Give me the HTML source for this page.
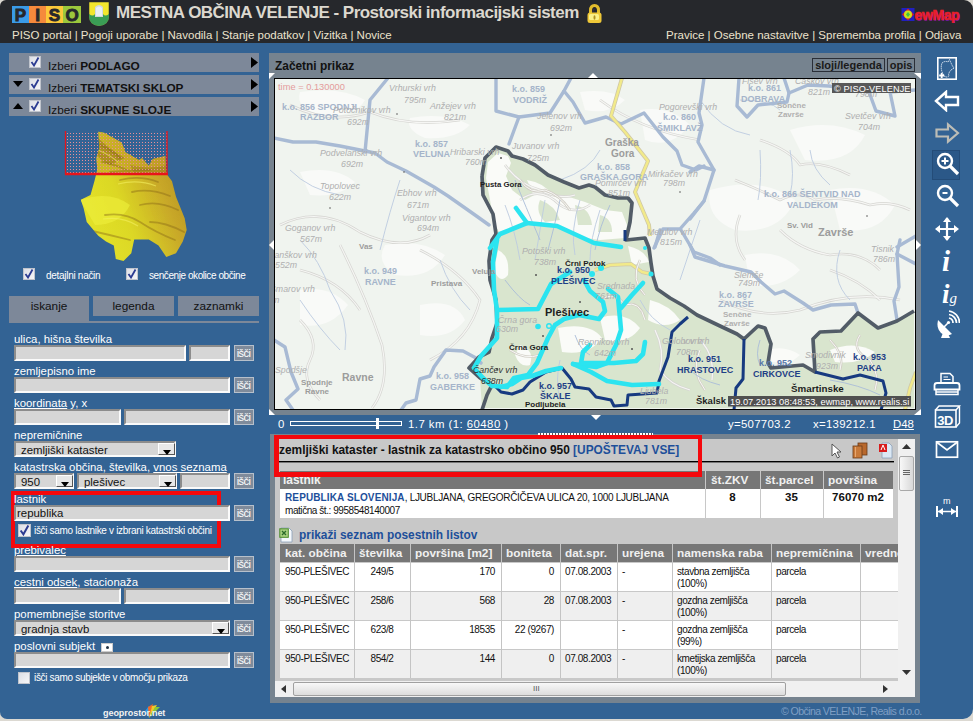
<!DOCTYPE html>
<html><head><meta charset="utf-8">
<style>
*{box-sizing:border-box}
html,body{margin:0;padding:0;width:973px;height:721px;overflow:hidden;background:#dcd9d2;font-family:"Liberation Sans",sans-serif}
.a{position:absolute}
#hdr{left:0;top:0;width:973px;height:43px;background:#26282c;border-radius:6px 9px 0 0}
#body{left:0;top:43px;width:973px;height:676px;background:#336394;border-radius:0 0 10px 7px}
.nav{color:#ece3cc;font-size:11.5px;white-space:nowrap}
.bar{left:9px;width:250px;height:19px;background:#7d8899}
.bar .t{left:39px;top:6px;font-size:11.8px;color:#111;white-space:nowrap}
.cb{width:12px;height:12px;background:linear-gradient(135deg,#dcdfe6,#f6f6f8);border:1px solid #c0c4cc}
.cb svg{position:absolute;left:0;top:0}
.lbl{color:#fff;font-size:11.4px;white-space:nowrap}
.inp{height:16px;background:#d6d6d6;border-top:2px solid #8c8c8c;border-left:2px solid #8c8c8c;border-bottom:2px solid #fafafa;border-right:2px solid #fafafa}
.btn{width:20px;height:16px;background:#7f8b9b;border:1px solid #b7c0cb;color:#fff;font-size:11px;line-height:14px;text-align:center;letter-spacing:-0.6px;text-indent:-1px}
.sel{height:16px;background:#d6d6d6;border-top:2px solid #8c8c8c;border-left:2px solid #8c8c8c;border-bottom:2px solid #fafafa;border-right:2px solid #fafafa;font-size:11.4px;color:#111;padding-left:5px;line-height:14px;white-space:nowrap}
.dd{width:17px;height:12px;background:#e8e8e8;border:1px solid #555;border-top-color:#fff;border-left-color:#fff}
.tab{height:20px;top:296px;background:#7d8899;color:#111;font-size:11.8px;text-align:center;line-height:20px}
.th{font-size:11.8px;font-weight:bold;color:#f0f0f0;background:#777;white-space:nowrap}
.td{font-size:10px;letter-spacing:-0.4px;color:#111;white-space:nowrap}
.tbi{color:#fff}
</style></head><body>
<div id="hdr" class="a"></div>
<div id="body" class="a"></div>

<!-- HEADER -->
<div class="a" style="left:12px;top:6px;width:17px;height:17px;background:#3a9be8"></div>
<div class="a" style="left:29px;top:6px;width:17px;height:17px;background:#f58a3c"></div>
<div class="a" style="left:46px;top:6px;width:17px;height:17px;background:#fcc93a"></div>
<div class="a" style="left:63px;top:6px;width:18px;height:17px;background:#9bc83c"></div>
<svg class="a" style="left:12px;top:6px" width="69" height="17" viewBox="0 0 69 17"><g font-family="Liberation Sans" font-weight="bold" font-size="17" fill="#26282c" stroke="#26282c" stroke-width="0.9" text-anchor="middle"><text x="8.5" y="14.8">P</text><text x="25.5" y="14.8">I</text><text x="42.5" y="14.8">S</text><text x="60" y="14.8">O</text></g></svg>
<svg class="a" style="left:88px;top:1px" width="22" height="26" viewBox="0 0 22 26">
<path d="M1 1 H21 V15 Q21 24 11 25 Q1 24 1 15 Z" fill="#f2e62e" stroke="#26282c" stroke-width="0.5"/>
<path d="M1 13 Q5 16 7 13 L15 13 Q17 16 21 13 V15 Q21 24 11 25 Q1 24 1 15 Z" fill="#3a9d55"/>
<path d="M7 16 V6 Q11 2 15 6 V16 Z" fill="#d0d8e0"/>
<path d="M8 15 V7 Q11 4 14 7 V15Z" fill="#e8eef4"/>
</svg>
<div class="a" style="left:116px;top:3px;font:bold 17px 'Liberation Sans';letter-spacing:-0.53px;color:#dcd8cf;white-space:nowrap">MESTNA OBČINA VELENJE - Prostorski informacijski sistem</div>
<svg class="a" style="left:586px;top:4px" width="17" height="20" viewBox="0 0 17 20">
<path d="M4.5 10 V6.5 Q4.5 1.5 8.5 1.5 Q12.5 1.5 12.5 6.5 V10" fill="none" stroke="#e2bc2c" stroke-width="3"/>
<path d="M6.8 8 Q7 5 8.8 5" fill="none" stroke="#3a3040" stroke-width="1.2"/>
<rect x="1.5" y="8.5" width="14" height="10.5" rx="2.5" fill="#eec838"/>
<rect x="3" y="10" width="10" height="6" rx="1.5" fill="#faf088"/>
<ellipse cx="8.5" cy="13.5" rx="1" ry="2.2" fill="#b09020"/>
</svg>
<div class="a nav" style="left:12px;top:29px">PISO portal | Pogoji uporabe | Navodila | Stanje podatkov | Vizitka | Novice</div>
<div class="a nav" style="left:666px;top:29px">Pravice | Osebne nastavitve | Sprememba profila | Odjava</div>
<svg class="a" style="left:901px;top:7px" width="62" height="16" viewBox="0 0 62 16">
<rect x="0.5" y="1" width="13" height="13" fill="#2020c0"/>
<path d="M7 1.5 L13 7.5 L7 13.5 L1 7.5Z" fill="#e02020"/>
<circle cx="7" cy="7.5" r="4" fill="#c8e020"/>
<path d="M5 7.5 L7 5 L9 7.5 L7 10Z" fill="#40c040"/>
<text x="14.5" y="13.5" font-family="Liberation Sans" font-weight="bold" font-size="14" fill="#5a1a9a" letter-spacing="-0.4">ewMap</text><text x="13.5" y="12.5" font-family="Liberation Sans" font-weight="bold" font-size="14" fill="#e8202a" stroke="#e8202a" stroke-width="0.6" letter-spacing="-0.4">ewMap</text>
</svg>
<!-- LEFT PANEL -->
<div class="a bar" style="top:53px"><div class="a cb" style="left:20px;top:3px"><svg width="10" height="10" viewBox="0 0 10 10"><path d="M1.5 5 L4 8.5 L8.5 0.5" fill="none" stroke="#2c3c92" stroke-width="1.8"/></svg></div><div class="a t">Izberi <b>PODLAGO</b></div><svg class="a" style="left:242px;top:4px" width="7" height="11"><path d="M0 0 L7 5.5 L0 11Z" fill="#000"/></svg></div>
<div class="a bar" style="top:75px"><svg class="a" style="left:4px;top:6px" width="10" height="7"><path d="M0 0 H10 L5 6Z" fill="#000"/></svg><div class="a cb" style="left:20px;top:3px"><svg width="10" height="10" viewBox="0 0 10 10"><path d="M1.5 5 L4 8.5 L8.5 0.5" fill="none" stroke="#2c3c92" stroke-width="1.8"/></svg></div><div class="a t">Izberi <b>TEMATSKI SKLOP</b></div><svg class="a" style="left:242px;top:4px" width="7" height="11"><path d="M0 0 L7 5.5 L0 11Z" fill="#000"/></svg></div>
<div class="a bar" style="top:97px"><svg class="a" style="left:4px;top:6px" width="10" height="7"><path d="M0 6 H10 L5 0Z" fill="#000"/></svg><div class="a cb" style="left:20px;top:3px"><svg width="10" height="10" viewBox="0 0 10 10"><path d="M1.5 5 L4 8.5 L8.5 0.5" fill="none" stroke="#2c3c92" stroke-width="1.8"/></svg></div><div class="a t">Izberi <b>SKUPNE SLOJE</b></div><svg class="a" style="left:242px;top:4px" width="7" height="11"><path d="M0 0 L7 5.5 L0 11Z" fill="#000"/></svg></div>

<!-- overview terrain -->
<svg class="a" style="left:60px;top:125px" width="135" height="140" viewBox="60 125 135 140">
<defs>
<linearGradient id="tg" x1="0" y1="0.6" x2="1" y2="0.2">
<stop offset="0" stop-color="#e6e62a"/><stop offset="0.4" stop-color="#dcd826"/><stop offset="0.7" stop-color="#c8a828"/><stop offset="1" stop-color="#b08a22"/></linearGradient>
<pattern id="dots" width="3" height="3" patternUnits="userSpaceOnUse"><rect x="1" y="1" width="1" height="1" fill="#e89098"/></pattern>
<clipPath id="tc"><path d="M98.3 131.8 L104.1 132.8 L121.6 142.5 L125.5 152.2 L139 160 L142 158 L148.8 165.8 L152.7 159 L165.3 156 L166.3 173.5 L172 181.3 L176 196.8 L184.7 218.2 L186.7 229.9 L182.8 241.5 L176 253.2 L166.3 257 L158.5 245.4 L148.8 239.6 L134.2 239.6 L131.3 253.2 L123.5 261 L115.8 259 L113.8 245.4 L106 241.5 L98.3 235.7 L86.7 222 L83.7 208.5 L80.8 199.8 L90.5 194.9 L94.4 181.3 L97.3 169.7 L96.4 158 L99.3 148.3Z"/></clipPath>
</defs>
<g clip-path="url(#tc)">
<rect x="60" y="125" width="135" height="140" fill="url(#tg)"/>
<path d="M80 200 Q110 190 130 205 Q120 225 95 225Z" fill="#ecec3a" opacity="0.7"/>
<rect x="90" y="125" width="80" height="50" fill="#c09a28" opacity="0.55"/>
<path d="M95 135 Q110 150 125 158 L110 165 Q98 160 95 150Z" fill="#8a6818" opacity="0.45"/>
<path d="M130 165 Q150 170 168 165 L168 175 L135 175Z" fill="#8a6818" opacity="0.35"/>
<g fill="none" stroke="#8a6a18" stroke-width="1.8" opacity="0.45" stroke-linecap="round">
<path d="M120 180 Q140 175 158 182"/>
<path d="M132 192 Q150 188 170 196"/>
<path d="M140 205 Q158 200 178 210"/>
<path d="M150 222 Q165 222 184 232"/>
<path d="M105 215 Q125 212 140 222 Q155 232 175 240"/>
<path d="M88 230 Q110 235 130 240"/>
<path d="M100 145 Q112 150 120 158"/>
<path d="M102 162 Q118 165 130 172"/>
<path d="M110 172 Q135 170 150 170"/>

</g>
<g fill="none" stroke="#f4f060" stroke-width="1.2" opacity="0.6">
<path d="M118 184 Q138 179 156 186"/>
<path d="M103 219 Q123 216 138 226"/>
<path d="M98 150 Q110 155 118 162"/>
</g>
</g>
<rect x="65" y="131.5" width="102.5" height="43" fill="url(#dots)"/>
<path d="M65.5 131 V174 H167 V131" fill="none" stroke="#e8141a" stroke-width="1.3"/>
<path d="M65 174 H168" stroke="#e8141a" stroke-width="2.5"/>
</svg>
<div class="a cb" style="left:23px;top:268px"><svg width="10" height="10" viewBox="0 0 10 10"><path d="M1.5 5 L4 8.5 L8.5 0.5" fill="none" stroke="#2c3c92" stroke-width="1.8"/></svg></div>
<div class="a" style="left:46px;top:270px;font-size:10px;letter-spacing:-0.29px;color:#fff;white-space:nowrap">detajlni način</div>
<div class="a cb" style="left:126px;top:268px"><svg width="10" height="10" viewBox="0 0 10 10"><path d="M1.5 5 L4 8.5 L8.5 0.5" fill="none" stroke="#2c3c92" stroke-width="1.8"/></svg></div>
<div class="a" style="left:149px;top:270px;font-size:10px;letter-spacing:-0.43px;color:#fff;white-space:nowrap">senčenje okolice občine</div>

<!-- tabs -->
<div class="a tab" style="left:9px;width:80px;height:27px">iskanje</div>
<div class="a tab" style="left:93px;width:81px">legenda</div>
<div class="a tab" style="left:178px;width:81px">zaznamki</div>
<div class="a" style="left:89px;top:321px;width:170px;height:2px;background:#7d8899"></div>

<!-- form -->
<div class="a lbl" style="left:14px;top:333px">ulica, hišna številka</div>
<div class="a inp" style="left:14px;top:345px;width:172px"></div>
<div class="a inp" style="left:189px;top:345px;width:41px"></div>
<div class="a btn" style="left:234px;top:345px">išči</div>

<div class="a lbl" style="left:14px;top:365px">zemljepisno ime</div>
<div class="a inp" style="left:14px;top:377px;width:216px"></div>
<div class="a btn" style="left:234px;top:377px">išči</div>

<div class="a lbl" style="left:14px;top:397px"><u>koordinata</u> y, x</div>
<div class="a inp" style="left:14px;top:409px;width:107px"></div>
<div class="a inp" style="left:124px;top:409px;width:106px"></div>
<div class="a btn" style="left:234px;top:409px">išči</div>

<div class="a lbl" style="left:14px;top:429px">nepremičnine</div>
<div class="a sel" style="left:14px;top:441px;width:162px">zemljiški kataster<div class="a dd" style="left:142px;top:0px"><svg class="a" style="left:4px;top:6px" width="8" height="5"><path d="M0 0H8L4 5Z" fill="#000"/></svg></div></div>

<div class="a lbl" style="left:14px;top:461px">katastrska občina, številka, <u>vnos seznama</u></div>
<div class="a sel" style="left:14px;top:473px;width:60px">950<div class="a dd" style="left:40px;top:0px"><svg class="a" style="left:4px;top:6px" width="8" height="5"><path d="M0 0H8L4 5Z" fill="#000"/></svg></div></div>
<div class="a sel" style="left:77px;top:473px;width:100px">plešivec<div class="a dd" style="left:80px;top:0px"><svg class="a" style="left:4px;top:6px" width="8" height="5"><path d="M0 0H8L4 5Z" fill="#000"/></svg></div></div>
<div class="a inp" style="left:180px;top:473px;width:50px"></div>
<div class="a btn" style="left:234px;top:473px">išči</div>

<div class="a" style="left:11px;top:491px;width:210px;height:57px;border:4px solid #f4080c"></div>
<div class="a lbl" style="left:14px;top:493px">lastnik</div>
<div class="a inp" style="left:14px;top:505px;width:216px;font-size:11.4px;color:#111;padding-left:1px;line-height:13px">republika</div>
<div class="a btn" style="left:234px;top:505px">išči</div>
<div class="a cb" style="left:18px;top:524px;width:13px;height:13px"><svg width="11" height="11" viewBox="0 0 10 10"><path d="M1.5 5 L4 8.5 L8.5 0.5" fill="none" stroke="#2c3c92" stroke-width="1.8"/></svg></div>
<div class="a" style="left:34px;top:525px;font-size:10px;letter-spacing:-0.32px;color:#fff;white-space:nowrap">išči samo lastnike v izbrani katastrski občini</div>

<div class="a lbl" style="left:14px;top:544px"><u>prebivalec</u></div>
<div class="a inp" style="left:14px;top:556px;width:216px"></div>
<div class="a btn" style="left:234px;top:556px">išči</div>

<div class="a lbl" style="left:14px;top:576px"><u>cestni odsek</u>, stacionaža</div>
<div class="a inp" style="left:14px;top:588px;width:107px"></div>
<div class="a inp" style="left:124px;top:588px;width:106px"></div>
<div class="a btn" style="left:234px;top:588px">išči</div>

<div class="a lbl" style="left:14px;top:608px">pomembnejše storitve</div>
<div class="a sel" style="left:14px;top:620px;width:216px">gradnja stavb<div class="a dd" style="left:196px;top:0px"><svg class="a" style="left:4px;top:6px" width="8" height="5"><path d="M0 0H8L4 5Z" fill="#000"/></svg></div></div>
<div class="a btn" style="left:234px;top:620px">išči</div>

<div class="a lbl" style="left:14px;top:640px">poslovni subjekt</div>
<div class="a" style="left:101px;top:643px;width:12px;height:9px;background:#fff;border:1px solid #ccc"><div class="a" style="left:4px;top:2px;width:3px;height:3px;background:#234;border-radius:2px"></div></div>
<div class="a inp" style="left:14px;top:652px;width:216px"></div>
<div class="a btn" style="left:234px;top:652px">išči</div>
<div class="a cb" style="left:18px;top:672px;width:12px;height:12px"></div>
<div class="a" style="left:34px;top:672px;font-size:10px;letter-spacing:-0.32px;color:#fff;white-space:nowrap">išči samo subjekte v območju prikaza</div>

<svg class="a" style="left:143px;top:703px" width="19" height="16" viewBox="0 0 19 16">
<path d="M6 15 L2 8 L6 3Z" fill="#2a9ae8"/>
<path d="M6 15 L5 4 L10 1Z" fill="#f06a28"/>
<path d="M6 15 L9 3 L14 2Z" fill="#f4c828"/>
<path d="M6 15 L12 4 L17 4 L11 10Z" fill="#8ac838"/>
</svg>
<div class="a" style="left:103px;top:708px;font:bold 9px 'Liberation Sans';color:#f2f2f2;letter-spacing:-0.05px">geoprostor.net</div>
<!-- MAP PANEL -->
<div class="a" style="left:269px;top:53px;width:652px;height:362px;background:#76838f"></div>
<div class="a" style="left:275px;top:59px;font:bold 11.9px 'Liberation Sans';color:#111;white-space:nowrap">Začetni prikaz</div>
<div class="a" style="left:812px;top:58px;width:73px;height:14px;border:1px solid #2a2f38;font:bold 11px/12px 'Liberation Sans';color:#1a1a1a;text-align:center">sloji/legenda</div>
<div class="a" style="left:887px;top:58px;width:28px;height:14px;border:1px solid #2a2f38;font:bold 11px/12px 'Liberation Sans';color:#1a1a1a;text-align:center">opis</div>
<div class="a" style="left:274px;top:78px;width:642px;height:332px;border:1px solid #000;background:#f3f5f1;overflow:hidden" id="map">
<svg width="640" height="330" viewBox="275 79 640 330" style="position:absolute;left:0;top:0">
<rect x="275" y="79" width="640" height="330" fill="#f0f4ef"/>
<!-- subtle white patches -->
<g fill="#f9faf8">
<path d="M300 92 Q340 86 365 100 Q355 118 320 116 Q295 108 300 92Z"/>
<path d="M410 118 Q445 112 470 125 Q455 140 425 138 Q405 130 410 118Z"/>
<path d="M300 172 Q335 165 355 182 Q340 198 310 195Z"/>
<path d="M385 245 Q420 238 445 255 Q430 280 395 275 Q375 262 385 245Z"/>
<path d="M300 290 Q330 285 348 305 Q330 330 300 325Z"/>
<path d="M420 305 Q455 298 465 320 Q450 340 420 335Z"/>
<path d="M710 190 Q760 175 795 200 Q780 235 735 230 Q705 218 710 190Z"/>
<path d="M790 130 Q830 118 865 135 Q850 165 805 160Z"/>
<path d="M830 190 Q870 182 895 205 Q880 235 840 230Z"/>
<path d="M640 110 Q670 105 690 125 Q670 150 645 140Z"/>
<path d="M745 255 Q780 248 800 270 Q780 290 750 285Z"/>
<path d="M580 92 Q610 88 625 100 Q610 115 585 110Z"/>
</g>
<!-- green fills -->
<g fill="#d9e5ce">
<path d="M482 176 L485 158 L496 147 L508 151 L512 156 L523 159 L535 165 L548 175 L564 182 L579 188 L589 185 L595 187 L605 195 L618 198 L628 198 L632 203 L630 222 L626 240 L645 238 L649 248 L651 263 L653 276 L657 289 L670 298 L684 306 L697 315 L720 326 L737 334 L744 339 L745 408 L482 408 L480 378 L469 368 L479 357 L489 352 L492 338 L497 323 L496 300 L490 280 L489 261 L492 240 L496 234 L493 214 L483 195Z"/>
<path d="M744 339 L758 326 L765 328 L771 344 L768 363 L771 368 L803 365 L815 372 L813 339 L820 332 L841 331 L858 313 L878 328 L897 321 L914 311 L914 408 L744 408Z"/>
</g>
<!-- white areas inside -->
<g fill="#fafbf8">
<path d="M486 178 L488 162 L498 153 L508 156 L511 163 L506 176 L512 190 L525 200 L540 192 L552 196 L566 196 L585 202 L605 210 L622 212 L627 225 L625 238 L600 240 L585 238 L560 226 L527 223 L500 234 L494 222 L490 200Z"/>
<path d="M527 180 Q545 183 552 195 L535 198Z"/>
<path d="M498 250 Q510 255 508 275 Q500 285 494 270Z"/>
<path d="M558 328 Q590 322 602 338 Q590 356 562 352Z"/>
<path d="M600 318 Q625 310 640 328 Q628 345 605 340Z"/>
<path d="M628 246 Q645 250 649 262 L632 265Z"/>
<path d="M768 350 Q785 345 800 355 L790 363 L772 362Z"/>
<path d="M830 350 Q855 340 875 352 Q860 365 835 362Z"/>
<path d="M650 300 Q670 305 680 320 Q665 330 648 320Z"/>
<path d="M520 345 Q535 350 530 365 Q520 368 515 355Z"/>
</g>
<g fill="#d9e5ce">
<path d="M540 200 Q555 205 560 220 L545 222 Q535 212 540 200Z"/>
<path d="M575 205 Q590 208 592 225 L578 225Z"/>
<path d="M600 215 Q612 218 612 232 L598 232Z"/>
</g>
<!-- faint contour/road lines -->
<g fill="none" stroke="#d6d6d2" stroke-width="2.6" stroke-linejoin="round">
<path id="r1" d="M290 105 Q330 125 370 112 Q410 128 460 120"/>
<path d="M280 225 Q320 205 360 232 Q400 252 430 235"/>
<path d="M340 245 Q365 295 382 345 Q390 385 372 408"/>
<path d="M420 250 Q460 270 480 300 Q470 340 430 360"/>
<path d="M735 180 Q760 190 780 200 Q800 190 815 200 Q840 195 870 205 Q890 200 910 210"/>
<path d="M720 300 Q760 320 800 310 Q850 290 900 300"/>
<path d="M300 270 Q340 280 360 310"/>
<path d="M600 100 Q640 130 700 140"/>
<path d="M520 200 Q540 185 560 205 Q575 215 590 205"/>
<path d="M505 165 Q520 185 540 190 Q560 200 575 195"/>
<path d="M780 230 Q800 250 830 255 Q860 250 880 270"/>
<path d="M760 140 Q790 150 800 165 Q820 160 850 175"/>
<path d="M740 215 Q730 240 745 260"/>
<path d="M830 270 Q860 280 880 300"/>
<path d="M300 320 Q320 340 310 360 Q300 380 320 400"/>
<path d="M655 330 Q665 350 660 370 Q670 385 690 390"/>
<path d="M700 340 Q715 355 712 380"/>
</g>
<g fill="none" stroke="#f6f6f4" stroke-width="1.2" stroke-linejoin="round">
<path d="M290 105 Q330 125 370 112 Q410 128 460 120"/>
<path d="M280 225 Q320 205 360 232 Q400 252 430 235"/>
<path d="M340 245 Q365 295 382 345 Q390 385 372 408"/>
<path d="M420 250 Q460 270 480 300 Q470 340 430 360"/>
<path d="M735 180 Q760 190 780 200 Q800 190 815 200 Q840 195 870 205 Q890 200 910 210"/>
<path d="M720 300 Q760 320 800 310 Q850 290 900 300"/>
<path d="M300 270 Q340 280 360 310"/>
<path d="M600 100 Q640 130 700 140"/>
<path d="M520 200 Q540 185 560 205 Q575 215 590 205"/>
<path d="M505 165 Q520 185 540 190 Q560 200 575 195"/>
<path d="M780 230 Q800 250 830 255 Q860 250 880 270"/>
<path d="M760 140 Q790 150 800 165 Q820 160 850 175"/>
<path d="M740 215 Q730 240 745 260"/>
<path d="M830 270 Q860 280 880 300"/>
<path d="M300 320 Q320 340 310 360 Q300 380 320 400"/>
<path d="M655 330 Q665 350 660 370 Q670 385 690 390"/>
<path d="M700 340 Q715 355 712 380"/>
</g>
<!-- thin streams -->
<g fill="none" stroke="#bccbe0" stroke-width="0.9">
<path d="M505 205 Q515 230 520 260"/>
<path d="M545 200 Q540 230 535 260"/>
<path d="M580 200 Q570 230 575 255"/>
<path d="M600 210 Q590 240 590 260"/>
<path d="M300 300 Q320 330 340 350"/>
<path d="M400 180 Q390 210 380 250"/>
<path d="M700 220 Q690 250 680 280"/>
<path d="M840 250 Q830 280 850 300"/>
<path d="M560 360 Q555 380 560 400"/>
<path d="M740 100 Q770 100 780 110"/>
<path d="M760 150 Q762 180 758 200"/>
<path d="M790 150 Q795 175 790 195"/>
<path d="M810 150 Q812 170 830 185"/>
<path d="M700 100 Q720 130 750 135"/>
<path d="M300 240 Q320 260 330 290 Q350 320 345 350"/>
<path d="M290 170 Q310 190 340 195"/>
<path d="M440 260 Q450 290 470 310"/>
<path d="M600 150 Q590 170 560 180"/>
<path d="M640 300 Q650 320 670 330"/>
</g>
<!-- light blue-gray borders -->
<g fill="none" stroke="#a8bad4" stroke-width="3.4" stroke-linejoin="round" stroke-linecap="round">
<path d="M388 78 L370 100 L365 152"/>
<path d="M274 138 L293 142 L316 142 L340 146 L375 153 L387 162 L406 171 L434 187 L448 196 L475 215 L489 225"/>
<path d="M496 78 L496 111 L519 117 L550 113 L564 91 L571 78"/>
<path d="M564 91 L573 102 L585 123 L606 117 L621 124 L644 113 L663 137 L677 151 L682 165 L696 170 L704 166"/>
<path d="M519 117 L516 125 L509 144"/>
<path d="M654 248 L663 229 L680 229 L694 213 L704 201 L714 170 L698 142 L702 125 L699 113 L704 78"/>
<path d="M690 172 L699 166 L714 170"/>
<path d="M704 201 L690 219"/>
<path d="M739 78 L737 106 L747 117 L758 105 L787 102 L789 93 L784 78"/>
<path d="M789 93 L808 85 L829 86 L869 92 L876 111 L895 116 L890 92 L916 90"/>
<path d="M897 247 L916 236"/>
<path d="M660 230 L655 247"/>
<path d="M681 230 L694 252 L710 258 L720 265"/>
<path d="M690 245 L695 257 L725 266 L751 272 L761 282 L775 294 L784 291 L803 303 L813 310 L831 305 L855 304 L858 313"/>
<path d="M900 240 L897 254 L899 287 L894 301 L897 320"/>
<path d="M897 254 L916 264"/>
<path d="M274 340 L285 347 L291 372 L298 389 L286 400 L293 410"/>
<path d="M401 410 L406 403 L416 400 L420 379 L430 376 L434 367 L446 350 L463 351 L476 358 L481 363"/>
</g>
<!-- yellow roads -->
<g fill="none" stroke="#cfc8a8" stroke-width="4" stroke-linejoin="round">
<path d="M622 78 L611 116 L625 132 L648 161 L635 192 L649 225 L650 236"/>
<path d="M595 270 L610 265 L631 264 L642 272 L651 274"/>
</g>
<g fill="none" stroke="#f2ea8a" stroke-width="2.4" stroke-linejoin="round">
<path d="M622 78 L611 116 L625 132 L648 161 L635 192 L649 225 L650 236"/>
<path d="M595 270 L610 265 L631 264 L642 272 L651 274"/>
</g>
<path d="M916 372 L910 388 L905 410" fill="none" stroke="#cfc8a8" stroke-width="4"/>
<path d="M916 372 L910 388 L905 410" fill="none" stroke="#f2ea8a" stroke-width="2.4"/>
<g fill="none" stroke="#d2cfc6" stroke-width="2.4">
<path d="M860 335 Q850 350 870 360 Q880 375 875 390"/>
<path d="M830 340 Q845 355 840 370"/>
<path d="M520 180 Q530 195 545 190 Q560 195 570 210"/>
<path d="M600 300 Q615 290 625 305 Q640 300 645 320"/>
<path d="M510 350 Q525 360 540 355"/>
<path d="M700 350 Q690 370 705 390"/>
<path d="M640 260 Q630 280 645 295"/>
</g>
<g fill="none" stroke="#f8f8f6" stroke-width="1">
<path d="M860 335 Q850 350 870 360 Q880 375 875 390"/>
<path d="M830 340 Q845 355 840 370"/>
<path d="M520 180 Q530 195 545 190 Q560 195 570 210"/>
<path d="M600 300 Q615 290 625 305 Q640 300 645 320"/>
<path d="M510 350 Q525 360 540 355"/>
<path d="M700 350 Q690 370 705 390"/>
<path d="M640 260 Q630 280 645 295"/>
</g>
<g fill="none" stroke="#a9bcd8" stroke-width="0.9">
<path d="M515 180 Q525 205 540 240"/>
<path d="M560 200 Q555 225 548 250"/>
<path d="M610 205 Q600 225 595 250"/>
<path d="M505 280 Q520 300 530 305"/>
<path d="M575 335 Q580 350 590 355"/>
<path d="M760 340 Q755 355 760 365"/>
<path d="M830 380 Q860 385 880 395"/>
<path d="M690 370 Q700 380 720 385"/>
</g>
<!-- dark boundary -->
<path d="M482 176 L485 158 L496 147 L508 151 L512 156 L523 159 L535 165 L548 175 L564 182 L579 188 L589 185 L595 187 L605 195 L618 198 L628 198 L632 203 L630 222 L626 240 L645 238 L649 248 L651 263 L653 276 L657 289 L670 298 L684 306 L697 315 L720 326 L737 334 L744 339 L758 326 L765 328 L771 344 L768 363 L771 368 L803 365 L815 372 L813 339 L820 332 L841 331 L858 313 L878 328 L897 321 L914 311" fill="none" stroke="#525c67" stroke-width="3.7" stroke-linejoin="round"/>
<path d="M482 176 L483 195 L493 214 L496 234 L492 240 L489 261 L490 280 L496 300 L497 323 L492 338 L489 352 L479 357 L469 368 L480 378 L492 385 L487 395 L482 410" fill="none" stroke="#525c67" stroke-width="3.7" stroke-linejoin="round"/>
<!-- dark blue boundaries -->
<g fill="none" stroke="#173a80" stroke-width="3" stroke-linejoin="round">
<path d="M494 385 L501 392 L512 394 L523 390 L530 382 L546 372 L562 368 L571 379 L575 387 L589 389 L596 397 L611 400 L614 406 L627 405 L628 395 L657 393 L659 381 L668 357 L672 332 L680 324 L688 317"/>
<path d="M625 230 L625 241"/>
<path d="M744 339 L743 379 L736 388 L734 410"/>
<path d="M815 372 L843 379 L860 375 L883 381 L886 393 L881 410"/>
</g>
<!-- cyan roads -->
<g fill="none" stroke="#2be4f0" stroke-width="4.6" stroke-linecap="round" stroke-linejoin="round">
<path d="M497 240 L493 262 L494 290 L497 310 L497 338 L481 356 L474 368 L483 378 L492 386"/>
<path d="M516 208 L527 223 L500 234 L490 248"/>
<path d="M527 223 L557 226 L594 243 L621 247"/>
<path d="M497 310 L538 309 L551 284 L570 272"/>
<path d="M584 280 L590 291 L603 302 L605 311 L599 319 L579 315 L564 319 L555 325 L548 338 L537 363 L528 375 L514 378 L507 387 L494 386"/>
<path d="M608 289 L618 297 L621 330 L616 345 L607 363 L596 367 L573 364"/>
<path d="M621 308 L632 295 L643 283"/>
<path d="M590 345 L583 352 L581 363 L614 363 L636 361 L643 354 L645 342"/>
<path d="M573 364 L591 372 L607 381 L632 385 L659 384"/>
<path d="M561 368 L546 371 L532 376 L521 378 L512 384 L501 387"/>
</g>
<circle cx="601" cy="268" r="3" fill="#2be4f0"/>
<circle cx="592" cy="274" r="3" fill="#2be4f0"/>
<circle cx="651" cy="274" r="2.5" fill="#2be4f0"/>
<circle cx="645" cy="248" r="2" fill="#2be4f0"/>
<circle cx="538" cy="326.5" r="2.8" fill="#2be4f0"/>
<circle cx="549" cy="326" r="2.3" fill="none" stroke="#2be4f0" stroke-width="1.4"/>
<!-- small dots -->
<g fill="#555">
<circle cx="501" cy="158" r="1"/><circle cx="397" cy="114" r="0.8"/><circle cx="404" cy="172" r="0.8"/>
<circle cx="551" cy="135" r="0.8"/><circle cx="536" cy="275" r="1"/><circle cx="580" cy="302" r="1"/>
<circle cx="543" cy="336" r="1"/><circle cx="632" cy="349" r="1"/><circle cx="497" cy="369" r="1"/>
<circle cx="867" cy="216" r="0.8"/><circle cx="680" cy="192" r="0.8"/><circle cx="330" cy="208" r="0.8"/>
</g>
<!-- gray-blue labels -->
<g font-family="Liberation Sans" font-weight="bold" font-size="9" fill="#a5b4ca">
<text x="282" y="110">k.o. 856 SPODNJI</text>
<text x="300" y="120">RAZBOR</text>
<text x="415" y="146.5">k.o. 857</text>
<text x="413" y="157">VELUNA</text>
<text x="512" y="92">k.o. 859</text>
<text x="513" y="103">VODRIŽ</text>
<text x="748" y="91">k.o. 861</text>
<text x="741" y="101.5">DOBRAVA</text>
<text x="663" y="120">k.o. 860</text>
<text x="657" y="130.5">ŠMIKLAVŽ</text>
<text x="597" y="170">k.o. 858</text>
<text x="580" y="180">GRAŠKA GORA</text>
<text x="764" y="197">k.o. 866 ŠENTVID NAD</text>
<text x="787" y="207.5">VALDEKOM</text>
<text x="364" y="274">k.o. 949</text>
<text x="365" y="285">RAVNE</text>
<text x="719" y="297.5">k.o. 867</text>
<text x="718" y="307">ZAVRŠE</text>
<text x="436" y="379">k.o. 958</text>
<text x="430" y="390">GABERKE</text>
</g>
<g font-family="Liberation Sans" font-weight="bold" font-size="9" fill="#1f3f86">
<text x="557" y="273">k.o. 950</text>
<text x="551" y="284">PLEŠIVEC</text>
<text x="539" y="389">k.o. 957</text>
<text x="540" y="398.5">ŠKALE</text>
<text x="688" y="362">k.o. 951</text>
<text x="677" y="372.5">HRASTOVEC</text>
<text x="759" y="366" fill="#5a78a8">k.o. 952</text>
<text x="753" y="377">CIRKOVCE</text>
<text x="853" y="360">k.o. 953</text>
<text x="857" y="370.5">PAKA</text>
</g>
<g font-family="Liberation Sans" font-weight="bold" fill="#9c9c9c">
<text x="605" y="145.5" font-size="10">Graška</text>
<text x="611" y="157" font-size="10">Gora</text>
<text x="818" y="235.5" font-size="11">Završe</text>
<text x="342" y="380.5" font-size="10.5">Ravne</text>
<text x="787" y="228" font-size="8">Sv. Vid</text>
<text x="359" y="248.5" font-size="8">Vas</text>
<text x="431" y="285.5" font-size="8">Pristava</text>
<text x="301" y="384.5" font-size="8">Spodnje</text>
<text x="305" y="394" font-size="8">Ravne</text>
<text x="777" y="107.5" font-size="8" fill="#b0b0b0">Sončne</text>
<text x="778" y="117" font-size="8" fill="#b0b0b0">Završe</text>
<text x="723" y="316.5" font-size="8" fill="#b0b0b0">Senčne</text>
<text x="724" y="325.5" font-size="8" fill="#b0b0b0">Završe</text>
<text x="472" y="274" font-size="8">Veluja</text>
</g>
<g font-family="Liberation Sans" font-style="italic" font-size="8.8" fill="#afafaf">
<text x="389" y="91">Vrhurski vrh</text><text x="404" y="103">795m</text>
<text x="430" y="108.7">Anžejev vrh</text><text x="444" y="120">821m</text>
<text x="333" y="113">Potočnikov vrh</text><text x="347" y="124.5">692m</text>
<text x="320" y="156">Podvelanski vrh</text><text x="341" y="166.5">692m</text>
<text x="320" y="189">Topolovec</text><text x="329" y="199.5">622m</text>
<text x="397" y="196">Ebhov vrh</text><text x="407" y="207.7">671m</text>
<text x="402" y="220.7">Vigantov vrh</text><text x="417" y="231.3">694m</text>
<text x="285" y="231.3">Goganov vrh</text><text x="300" y="242">567m</text>
<text x="270" y="257.7">Janškov vrh</text><text x="275" y="268.3">552m</text>
<text x="270" y="292.4">Šmarov vrh</text><text x="272" y="302.5">   m</text>
<text x="450" y="154.6">Hribarski vrh</text><text x="465" y="165.3">760m</text>
<text x="537" y="119.4">Jelenov vrh</text><text x="550" y="130.5">692m</text>
<text x="512" y="149">Juvanov vrh</text><text x="527" y="160.7">725m</text>
<text x="659" y="110">Pogorevški vrh</text>
<text x="648" y="177">Mirkačev vrh</text><text x="663" y="185.6">798m</text>
<text x="595" y="185.6">Pomirčev vrh</text><text x="608" y="196.2">851m</text>
<text x="647" y="235.2">Metulov vrh</text><text x="660" y="244.7">815m</text>
<text x="742" y="84">Fišev vrh</text>
<text x="795" y="84">Časkov vrh</text><text x="808" y="94.5">821m</text><text x="855" y="97">798m</text>
<text x="845" y="119.2">Svetčev vrh</text><text x="858" y="130.3">704m</text>
<text x="871" y="251.8">Tisnik</text><text x="873" y="262.4">786m</text>
<text x="734" y="277.7">Slemše</text><text x="738" y="286">749m</text>
<text x="522" y="254.2">Potoški vrh</text><text x="534" y="264.8">738m</text>
<text x="597" y="288.5">Srednada</text><text x="595" y="299">761m</text>
<text x="498" y="322.7">Črna gora</text><text x="496" y="332.2">630m</text>
<text x="578" y="345.2">Repnikov vrh</text><text x="594" y="355.8">642m</text>
<text x="662" y="344">Golobov vrh</text><text x="676" y="354.7">708m</text>
<text x="805" y="357.8">Smodivnik</text><text x="816" y="369.2">923m</text>
<text x="640" y="393.7">Ljubela</text><text x="645" y="403.6">781m</text>
<text x="275" y="373">Spodšje</text>
<text x="683" y="343.7">v vrh</text>
</g>
<g font-family="Liberation Sans" font-style="italic" font-size="8.8" fill="#333">
<text x="473" y="373.3">Čančev vrh</text><text x="481" y="383.9">638m</text>
</g>
<g font-family="Liberation Sans" font-weight="bold" fill="#1e1e1e">
<text x="480" y="187.2" font-size="7.8">Pusta Gora</text>
<text x="565" y="265.5" font-size="8">Črni Potok</text>
<text x="545" y="315.7" font-size="11">Plešivec</text>
<text x="509" y="350" font-size="8">Črna Gora</text>
<text x="791" y="392" font-size="9.8">Šmartinske</text>
<text x="696" y="403.8" font-size="9.5">Škalsk</text>
<text x="525" y="406.7" font-size="8">Podljubela</text>
</g>
<!-- overlays -->
<text x="278" y="90.3" font-family="Liberation Sans" font-size="9.3" fill="#e49c9c">time = 0.130000</text>
<rect x="832" y="83" width="79" height="10" fill="#585858"/>
<text x="834" y="91.6" font-family="Liberation Sans" font-size="9.2" fill="#fff" letter-spacing="0.1">© PISO-VELENJE</text>
<rect x="728" y="396" width="183" height="10.5" fill="#505050"/>
<text x="730" y="404.8" font-family="Liberation Sans" font-size="9.3" fill="#fff">19.07.2013 08:48:53, ewmap, www.realis.si</text>
</svg>

</div>
<svg class="a" style="left:269px;top:73px" width="6" height="6"><path d="M0 0 H6 L0 6Z" fill="#fff"/></svg>
<svg class="a" style="left:914px;top:73px" width="7" height="6"><path d="M0 0 H7 V6Z" fill="#fff"/></svg>
<svg class="a" style="left:269px;top:409px" width="6" height="6"><path d="M0 0 V6 H6Z" fill="#fff"/></svg>
<svg class="a" style="left:914px;top:409px" width="7" height="6"><path d="M7 0 V6 H0Z" fill="#fff"/></svg>
<svg class="a" style="left:588px;top:73px" width="10" height="5"><path d="M0 5 L5 0 L10 5Z" fill="#fff"/></svg>
<svg class="a" style="left:591px;top:415px" width="10" height="5"><path d="M0 0 L5 5 L10 0Z" fill="#fff"/></svg>
<svg class="a" style="left:269px;top:240px" width="5" height="10"><path d="M5 0 L0 5 L5 10Z" fill="#fff"/></svg>
<svg class="a" style="left:916px;top:240px" width="5" height="10"><path d="M0 0 L5 5 L0 10Z" fill="#fff"/></svg>

<!-- scale row -->
<div class="a" style="left:278px;top:418px;font-size:11.4px;color:#fff">0</div>
<div class="a" style="left:290px;top:421px;width:112px;height:5px;border:1px solid #fff"></div>
<div class="a" style="left:376px;top:418px;width:3px;height:11px;background:#fff"></div>
<div class="a" style="left:408px;top:418px;font-size:11.4px;color:#fff;white-space:nowrap;letter-spacing:0.45px">1.7 km (1: <u>60480</u> )</div>
<div class="a" style="left:728px;top:418px;font-size:11.4px;color:#fff;white-space:nowrap;letter-spacing:0.3px">y=507703.2</div>
<div class="a" style="left:813px;top:418px;font-size:11.4px;color:#fff;white-space:nowrap;letter-spacing:0.3px">x=139212.1</div>
<div class="a" style="left:893px;top:418px;font-size:11.4px;color:#fff;white-space:nowrap"><u>D48</u></div>
<!-- LOWER PANEL -->
<div class="a" style="left:270px;top:434px;width:650px;height:269px;background:#76838f"></div>
<div class="a" style="left:275px;top:439px;width:623px;height:258px;background:#c8c8c8;overflow:hidden">
 <div class="a" style="left:4px;top:4px;font:bold 11.9px 'Liberation Sans';color:#111;white-space:nowrap">zemljiški kataster - lastnik za katastrsko občino 950 <span style="color:#1d4f9a">[UPOŠTEVAJ VSE]</span></div>
 <div class="a" style="left:3px;top:22px;width:616px;height:1px;background:#000"></div><div class="a" style="left:3px;top:23px;width:616px;height:1px;background:#777"></div>
 <!-- icons -->
 <svg class="a" style="left:556px;top:4px" width="11" height="16" viewBox="0 0 11 16"><path d="M1 1 V13 L4 10 L6.5 15 L8.5 14 L6 9 L10 9Z" fill="#fff" stroke="#555" stroke-width="1"/></svg>
 <svg class="a" style="left:577px;top:3px" width="16" height="17" viewBox="0 0 16 17"><rect x="6" y="1" width="9" height="12" fill="#b8682c" stroke="#6a3a18" stroke-width="0.8"/><rect x="1" y="4" width="9" height="12" fill="#c87a3a" stroke="#6a3a18" stroke-width="0.8"/><rect x="3" y="5" width="1" height="10" fill="#e8a870"/></svg>
 <svg class="a" style="left:603px;top:3px" width="15" height="17" viewBox="0 0 15 17"><path d="M4 1 H11 L14 4 V16 H4Z" fill="#dbe8f4" stroke="#8aa0b8" stroke-width="0.8"/><rect x="1" y="2" width="8" height="8" fill="#d81c1c"/><path d="M3 8 L5 3 L7 8" fill="none" stroke="#fff" stroke-width="1"/></svg>
 <!-- upper table -->
 <div class="a th" style="left:5px;top:32px;width:613px;height:18px"></div>
 <div class="a th" style="left:8px;top:34px;font-size:11.9px">lastnik</div>
 <div class="a" style="left:5px;top:50px;width:613px;height:29px;background:#fff"></div>
 <div class="a" style="left:430px;top:32px;width:1px;height:47px;background:#c8c8c8"></div>
 <div class="a" style="left:485px;top:32px;width:1px;height:47px;background:#c8c8c8"></div>
 <div class="a" style="left:548px;top:32px;width:1px;height:47px;background:#c8c8c8"></div>
 <div class="a th" style="left:436px;top:34px;background:none">št.ZKV</div>
 <div class="a th" style="left:490px;top:34px;background:none">št.parcel</div>
 <div class="a th" style="left:553px;top:34px;background:none">površina</div>
 <div class="a" style="left:10px;top:53px;font-size:10px;letter-spacing:-0.3px;color:#111;white-space:nowrap"><b style="color:#1d4f9a;letter-spacing:0.12px">REPUBLIKA SLOVENIJA</b>, LJUBLJANA, GREGORČIČEVA ULICA 20, 1000 LJUBLJANA</div>
 <div class="a" style="left:10px;top:66px;font-size:10px;letter-spacing:-0.44px;color:#111;white-space:nowrap">matična št.: 9958548140007</div>
 <div class="a" style="left:430px;top:52px;width:55px;text-align:center;font:bold 11.5px 'Liberation Sans';color:#111">8</div>
 <div class="a" style="left:485px;top:52px;width:63px;text-align:center;font:bold 11.5px 'Liberation Sans';color:#111">35</div>
 <div class="a" style="left:548px;top:52px;width:70px;text-align:center;font:bold 11.5px 'Liberation Sans';color:#111">76070 m2</div>
 <!-- link -->
 <svg class="a" style="left:4px;top:88px" width="14" height="16" viewBox="0 0 14 16"><path d="M2 1 H10 L13 4 V15 H2Z" fill="#f4f8fc" stroke="#8aa0b8" stroke-width="0.8"/><rect x="0.8" y="1.8" width="8.5" height="8.5" fill="#a8d080" stroke="#4a8a2a" stroke-width="1"/><path d="M3 4 L7 8 M7 4 L3 8" stroke="#2a6a2a" stroke-width="1.3"/></svg>
 <div class="a" style="left:24px;top:89px;font:bold 11.9px 'Liberation Sans';color:#1d4f9a;white-space:nowrap">prikaži seznam posestnih listov</div>
 <!-- lower table -->
 <div class="a" style="left:5px;top:105px;width:620px;height:18px;background:#777"></div>
<div class="a th" style="left:10px;top:107px;background:none">kat. občina</div>
<div class="a th" style="left:84px;top:107px;background:none">številka</div>
<div class="a" style="left:79px;top:105px;width:1px;height:134px;background:#c4c4c4"></div>
<div class="a th" style="left:140px;top:107px;background:none">površina [m2]</div>
<div class="a" style="left:135px;top:105px;width:1px;height:134px;background:#c4c4c4"></div>
<div class="a th" style="left:231px;top:107px;background:none">boniteta</div>
<div class="a" style="left:226px;top:105px;width:1px;height:134px;background:#c4c4c4"></div>
<div class="a th" style="left:290px;top:107px;background:none">dat.spr.</div>
<div class="a" style="left:285px;top:105px;width:1px;height:134px;background:#c4c4c4"></div>
<div class="a th" style="left:347px;top:107px;background:none">urejena</div>
<div class="a" style="left:342px;top:105px;width:1px;height:134px;background:#c4c4c4"></div>
<div class="a th" style="left:402px;top:107px;background:none">namenska raba</div>
<div class="a" style="left:397px;top:105px;width:1px;height:134px;background:#c4c4c4"></div>
<div class="a th" style="left:501px;top:107px;background:none">nepremičnina</div>
<div class="a" style="left:496px;top:105px;width:1px;height:134px;background:#c4c4c4"></div>
<div class="a th" style="left:590px;top:107px;background:none">vrednost</div>
<div class="a" style="left:585px;top:105px;width:1px;height:134px;background:#c4c4c4"></div>
<div class="a" style="left:5px;top:123px;width:620px;height:29px;background:#fff;border-top:1px solid #c8c8c8"></div>
<div class="a td" style="left:10px;top:127px;line-height:12px">950-PLEŠIVEC</div>
<div class="a td" style="left:79px;width:56px;text-align:center;top:127px;line-height:12px">249/5</div>
<div class="a td" style="left:135px;width:85px;text-align:right;top:127px;line-height:12px">170</div>
<div class="a td" style="left:226px;width:53px;text-align:right;top:127px;line-height:12px">0</div>
<div class="a td" style="left:290px;top:127px;line-height:12px">07.08.2003</div>
<div class="a td" style="left:347px;top:127px;line-height:12px">-</div>
<div class="a td" style="left:402px;top:127px;line-height:12px">stavbna zemljišča<br>(100%)</div>
<div class="a td" style="left:501px;top:127px;line-height:12px">parcela</div>
<div class="a td" style="left:590px;top:127px;line-height:12px"></div>
<div class="a" style="left:5px;top:152px;width:620px;height:29px;background:#efefef;border-top:1px solid #c8c8c8"></div>
<div class="a td" style="left:10px;top:156px;line-height:12px">950-PLEŠIVEC</div>
<div class="a td" style="left:79px;width:56px;text-align:center;top:156px;line-height:12px">258/6</div>
<div class="a td" style="left:135px;width:85px;text-align:right;top:156px;line-height:12px">568</div>
<div class="a td" style="left:226px;width:53px;text-align:right;top:156px;line-height:12px">28</div>
<div class="a td" style="left:290px;top:156px;line-height:12px">07.08.2003</div>
<div class="a td" style="left:347px;top:156px;line-height:12px">-</div>
<div class="a td" style="left:402px;top:156px;line-height:12px">gozdna zemljišča<br>(100%)</div>
<div class="a td" style="left:501px;top:156px;line-height:12px">parcela</div>
<div class="a td" style="left:590px;top:156px;line-height:12px"></div>
<div class="a" style="left:5px;top:181px;width:620px;height:29px;background:#fff;border-top:1px solid #c8c8c8"></div>
<div class="a td" style="left:10px;top:185px;line-height:12px">950-PLEŠIVEC</div>
<div class="a td" style="left:79px;width:56px;text-align:center;top:185px;line-height:12px">623/8</div>
<div class="a td" style="left:135px;width:85px;text-align:right;top:185px;line-height:12px">18535</div>
<div class="a td" style="left:226px;width:53px;text-align:right;top:185px;line-height:12px">22 (9267)</div>
<div class="a td" style="left:290px;top:185px;line-height:12px"></div>
<div class="a td" style="left:347px;top:185px;line-height:12px">-</div>
<div class="a td" style="left:402px;top:185px;line-height:12px">gozdna zemljišča<br>(99%)</div>
<div class="a td" style="left:501px;top:185px;line-height:12px">parcela</div>
<div class="a td" style="left:590px;top:185px;line-height:12px"></div>
<div class="a" style="left:5px;top:210px;width:620px;height:29px;background:#efefef;border-top:1px solid #c8c8c8"></div>
<div class="a td" style="left:10px;top:214px;line-height:12px">950-PLEŠIVEC</div>
<div class="a td" style="left:79px;width:56px;text-align:center;top:214px;line-height:12px">854/2</div>
<div class="a td" style="left:135px;width:85px;text-align:right;top:214px;line-height:12px">144</div>
<div class="a td" style="left:226px;width:53px;text-align:right;top:214px;line-height:12px">0</div>
<div class="a td" style="left:290px;top:214px;line-height:12px">07.08.2003</div>
<div class="a td" style="left:347px;top:214px;line-height:12px">-</div>
<div class="a td" style="left:402px;top:214px;line-height:12px">kmetijska zemljišča<br>(100%)</div>
<div class="a td" style="left:501px;top:214px;line-height:12px">parcela</div>
<div class="a td" style="left:590px;top:214px;line-height:12px"></div>
<div class="a" style="left:79px;top:123px;width:1px;height:116px;background:#c4c4c4"></div>
<div class="a" style="left:135px;top:123px;width:1px;height:116px;background:#c4c4c4"></div>
<div class="a" style="left:226px;top:123px;width:1px;height:116px;background:#c4c4c4"></div>
<div class="a" style="left:285px;top:123px;width:1px;height:116px;background:#c4c4c4"></div>
<div class="a" style="left:342px;top:123px;width:1px;height:116px;background:#c4c4c4"></div>
<div class="a" style="left:397px;top:123px;width:1px;height:116px;background:#c4c4c4"></div>
<div class="a" style="left:496px;top:123px;width:1px;height:116px;background:#c4c4c4"></div>
<div class="a" style="left:585px;top:123px;width:1px;height:116px;background:#c4c4c4"></div>
<div class="a" style="left:0px;top:105px;width:5px;height:137px;background:#c8c8c8"></div>
 <!-- h scrollbar -->
 <div class="a" style="left:0;top:242px;width:623px;height:16px;background:#f0f0f0"></div>
 <svg class="a" style="left:6px;top:246px" width="5" height="8"><path d="M5 0 V8 L0 4Z" fill="#333"/></svg>
 <div class="a" style="left:18px;top:243px;width:493px;height:14px;background:linear-gradient(#f8f8f8,#dcdcdc);border:1px solid #a0a0a0;border-radius:2px"></div>
 <div class="a" style="left:258px;top:245px;font-size:8px;color:#555">III</div>
 <svg class="a" style="left:608px;top:246px" width="5" height="8"><path d="M0 0 V8 L5 4Z" fill="#333"/></svg>
</div>
<!-- v scrollbar -->
<div class="a" style="left:898px;top:439px;width:17px;height:258px;background:#f0f0f0"></div>
<svg class="a" style="left:902px;top:444px" width="9" height="5"><path d="M0 5 L4.5 0 L9 5Z" fill="#333"/></svg>
<div class="a" style="left:899px;top:456px;width:15px;height:35px;background:linear-gradient(90deg,#f8f8f8,#d8d8d8);border:1px solid #a8a8a8;border-radius:2px"></div>
<div class="a" style="left:903px;top:470px;width:7px;height:1px;background:#666;box-shadow:0 2px 0 #666,0 4px 0 #666"></div>
<svg class="a" style="left:902px;top:670px" width="9" height="5"><path d="M0 0 L4.5 5 L9 0Z" fill="#333"/></svg>
<div class="a" style="left:274px;top:435px;width:428px;height:42px;border:4px solid #f4080c;border-width:4px 4px 5px 5px"></div>
<div class="a" style="left:538px;top:433px;width:115px;height:2px;background:repeating-linear-gradient(90deg,#fff 0 2px,#555 2px 3px)"></div>
<!-- TOOLBAR -->
<svg class="a" style="left:936px;top:56px" width="22" height="25" viewBox="0 0 22 25">
<rect x="1.8" y="1.8" width="18.4" height="21.4" fill="none" stroke="#fff" stroke-width="1.6"/>
<path d="M6 7 Q9 4.5 12 6 L13.5 3.5 Q15 7 16.5 10 L18 12 L15 14 Q13 16 12.5 19 Q14 21 10 21 L8 20 L6 16 Q4.5 11 6 7Z" fill="none" stroke="#e8eef6" stroke-width="0.9" stroke-dasharray="1.5 0.6"/>
<path d="M3.2 19.5 H8.2 M5.7 17 V22" stroke="#fff" stroke-width="1.8"/>
</svg>
<svg class="a" style="left:934px;top:90px" width="26" height="22" viewBox="0 0 26 22"><path d="M2 11 L12 2 V7 H24 V15 H12 V20Z" fill="none" stroke="#fff" stroke-width="2.4" stroke-linejoin="miter"/></svg>
<svg class="a" style="left:934px;top:122px" width="26" height="22" viewBox="0 0 26 22"><path d="M24 11 L14 2.5 V7.5 H2.5 V14.5 H14 V19.5Z" fill="none" stroke="#bdbdb6" stroke-width="2.2"/></svg>
<div class="a" style="left:932px;top:150px;width:28px;height:30px;background:#2b5888;border:1px solid #244c78"></div>
<svg class="a" style="left:935px;top:151px" width="26" height="26" viewBox="0 0 26 26"><circle cx="10" cy="10" r="7" fill="none" stroke="#fff" stroke-width="2.4"/><path d="M15 15 L23 23" stroke="#fff" stroke-width="3.2"/><path d="M6.5 10 H13.5 M10 6.5 V13.5" stroke="#fff" stroke-width="2"/></svg>
<svg class="a" style="left:935px;top:183px" width="26" height="26" viewBox="0 0 26 26"><circle cx="10" cy="10" r="7" fill="none" stroke="#fff" stroke-width="2.4"/><path d="M15 15 L23 23" stroke="#fff" stroke-width="3.2"/><path d="M7.5 10 H12.5" stroke="#fff" stroke-width="2"/></svg>
<svg class="a" style="left:934px;top:216px" width="26" height="26" viewBox="0 0 26 26"><path d="M13 2 V24 M2 13 H24" stroke="#fff" stroke-width="2.2"/><path d="M13 1 L9 6 H17Z M13 25 L9 20 H17Z M1 13 L6 9 V17Z M25 13 L20 9 V17Z" fill="#fff"/></svg>
<div class="a" style="left:942px;top:247px;font:italic bold 29px/29px 'Liberation Serif';color:#fff">i</div>
<div class="a" style="left:942px;top:281px;font:italic bold 27px/27px 'Liberation Serif';color:#fff">i<span style="font-size:15px;font-weight:normal">g</span></div>
<svg class="a" style="left:935px;top:310px" width="25" height="30" viewBox="0 0 25 30">
<path d="M3 10 Q1 18 6 23 Q11 27 17 24 Z" fill="#fff"/>
<path d="M9 20 L6 28 H15 L12 21Z" fill="#fff"/>
<path d="M9 17 L13 13" stroke="#fff" stroke-width="1.6"/>
<circle cx="13.5" cy="12.5" r="1.6" fill="#fff"/>
<path d="M14 8 A5 5 0 0 1 18 13" fill="none" stroke="#fff" stroke-width="1.7"/>
<path d="M14 4.5 A8.5 8.5 0 0 1 21.5 13" fill="none" stroke="#fff" stroke-width="1.7"/>
<path d="M14 1 A12 12 0 0 1 24.5 13" fill="none" stroke="#fff" stroke-width="1.7"/>
</svg>
<svg class="a" style="left:933px;top:372px" width="28" height="25" viewBox="0 0 28 25">
<path d="M8 1.5 H17 L20 4.5 V11 H8Z" fill="none" stroke="#fff" stroke-width="1.5"/>
<path d="M10.5 5 H15 M10.5 7.5 H17.5" stroke="#fff" stroke-width="1.2"/>
<path d="M4 11 H24 Q26.5 11 26.5 13.5 V17.5 H1.5 V13.5 Q1.5 11 4 11Z" fill="none" stroke="#fff" stroke-width="1.8"/>
<path d="M3 17.5 V22.5 H25 V17.5 M3 20 H25" fill="none" stroke="#fff" stroke-width="1.5"/>
</svg>
<svg class="a" style="left:934px;top:404px" width="27" height="25" viewBox="0 0 27 25">
<rect x="1.5" y="6" width="20.5" height="17" fill="none" stroke="#fff" stroke-width="1.6"/>
<path d="M1.5 6 L5 2 H25.5 L22 6 M22 23 L25.5 19 V2" fill="none" stroke="#fff" stroke-width="1.4"/>
<text x="3.2" y="20.5" font-family="Liberation Sans" font-weight="bold" font-size="13" fill="#fff" letter-spacing="-0.3">3D</text>
</svg>
<svg class="a" style="left:934px;top:440px" width="26" height="20" viewBox="0 0 26 20"><rect x="2.5" y="1.8" width="21" height="15.4" fill="none" stroke="#fff" stroke-width="1.7"/><path d="M2.5 2 L13 10 L23.5 2" fill="none" stroke="#fff" stroke-width="1.7"/></svg>
<svg class="a" style="left:934px;top:496px" width="26" height="22" viewBox="0 0 26 22"><text x="9" y="8" font-family="Liberation Sans" font-size="9" fill="#fff">m</text><path d="M3 10 V21 M23 10 V21" stroke="#fff" stroke-width="2"/><path d="M4 15.5 H22" stroke="#fff" stroke-width="1.5"/><path d="M4 15.5 L9 12 V19Z M22 15.5 L17 12 V19Z" fill="#fff"/></svg>
<!-- footer -->
<div class="a" style="left:781px;top:705px;font-size:10.6px;color:#7f9fc4;white-space:nowrap;letter-spacing:-0.6px">© Občina VELENJE, Realis d.o.o.</div>

</body></html>
